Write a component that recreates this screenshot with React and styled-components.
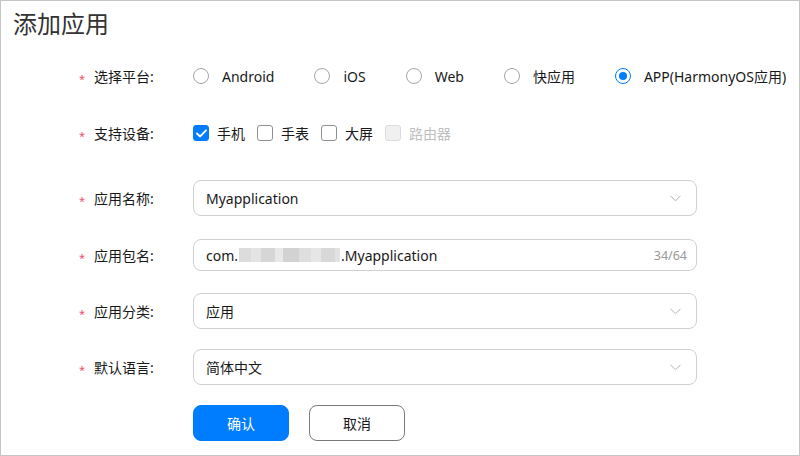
import React from 'react';
import styled, { createGlobalStyle } from 'styled-components';

const GlobalStyle = createGlobalStyle`
  html, body {
    margin: 0;
    padding: 0;
    background: #fff;
  }
  body {
    font-family: "Noto Sans", "Noto Sans CJK SC", sans-serif;
    color: #191919;
  }
`;

const Page = styled.div`
  width: 800px;
  height: 456px;
  box-sizing: border-box;
  border: 1px solid #c4c4c4;
  background: #fff;
  overflow: hidden;
`;

const Title = styled.h1`
  margin: 0;
  padding: 7px 0 0 12px;
  font-size: 24px;
  line-height: 32px;
  font-weight: 400;
  color: #333;
`;

const Form = styled.div`
  display: flex;
  flex-direction: column;
  gap: 20px;
  margin-top: 18px;
  padding-left: 77px;
`;

const Row = styled.div`
  display: flex;
  align-items: center;
  height: 36px;
  margin-top: ${(p) => p.$mt || 0}px;
`;

const Label = styled.div`
  width: 115px;
  flex-shrink: 0;
  display: flex;
  align-items: center;
  font-size: 14px;
  color: #191919;
`;

const Star = styled.span`
  color: #f0506e;
  font-size: 11px;
  width: 15px;
  padding-left: 1px;
  line-height: 1;
  transform: translateY(2px);
`;

const Options = styled.div`
  display: flex;
  align-items: center;
  gap: ${(p) => p.$gap}px;
`;

const Option = styled.label`
  display: flex;
  align-items: center;
  gap: ${(p) => p.$gap}px;
  font-size: 14px;
  color: ${(p) => (p.$disabled ? '#c0c0c0' : '#191919')};
`;

const Radio = styled.span`
  width: 16px;
  height: 16px;
  box-sizing: border-box;
  border-radius: 50%;
  border: ${(p) => (p.$on ? '1.5px solid #007dff' : '1.2px solid #a6a6a6')};
  display: flex;
  align-items: center;
  justify-content: center;
  &::after {
    content: '';
    display: ${(p) => (p.$on ? 'block' : 'none')};
    width: 8px;
    height: 8px;
    border-radius: 50%;
    background: #007dff;
  }
`;

const Check = styled.span`
  width: 16px;
  height: 16px;
  box-sizing: border-box;
  border-radius: 3px;
  display: flex;
  align-items: center;
  justify-content: center;
  background: ${(p) => (p.$on ? '#007dff' : p.$disabled ? '#f0f0f0' : '#fff')};
  border: 1px solid ${(p) => (p.$on ? '#007dff' : p.$disabled ? '#dcdcdc' : '#8f8f8f')};
`;

const Field = styled.div`
  width: 504px;
  height: ${(p) => p.$h}px;
  box-sizing: border-box;
  border: 1px solid #d0d0d0;
  border-radius: 8px;
  display: flex;
  align-items: center;
  padding: 0 9px 0 12px;
  font-size: 14px;
  color: #191919;
`;

const Value = styled.span`
  flex: 1;
  display: flex;
  align-items: center;
  white-space: nowrap;
`;

const Counter = styled.span`
  font-size: 12.5px;
  color: #999;
`;

const Chevron = styled.svg`
  margin-right: 6px;
`;

const Blur = styled.span`
  display: inline-flex;
  height: 14px;
  margin: 0 1px;
  span {
    display: inline-block;
    height: 100%;
  }
`;

const Buttons = styled.div`
  display: flex;
  gap: 20px;
  padding-left: 115px;
`;

const Button = styled.button`
  width: 96px;
  height: 36px;
  box-sizing: border-box;
  border-radius: 8px;
  font-family: inherit;
  font-size: 14px;
  cursor: pointer;
  background: ${(p) => (p.$primary ? '#007dff' : '#fff')};
  color: ${(p) => (p.$primary ? '#fff' : '#191919')};
  border: 1px solid ${(p) => (p.$primary ? '#007dff' : '#7a7a7a')};
`;

const platforms = ['Android', 'iOS', 'Web', '快应用', 'APP(HarmonyOS应用)'];
const devices = [
  { name: '手机', on: true },
  { name: '手表' },
  { name: '大屏' },
  { name: '路由器', disabled: true },
];
const blurs = [
  ['#dcdcdc', 12], ['#e4e4e4', 10], ['#d6d6d6', 14], ['#e8e8e8', 8],
  ['#d2d2d2', 16], ['#dedede', 12], ['#e6e6e6', 10], ['#d8d8d8', 14], ['#e2e2e2', 5],
];

const Select = ({ value }) => (
  <Field $h={36}>
    <Value>{value}</Value>
    <Chevron width="11" height="7" viewBox="0 0 11 7">
      <path d="M0.5 0.8 L5.5 5.8 L10.5 0.8" fill="none" stroke="#b3b3b3" strokeWidth="1" />
    </Chevron>
  </Field>
);

const App = () => {
  return (
    <Page>
      <GlobalStyle />
      <Title>添加应用</Title>
      <Form>
        <Row>
          <Label><Star>*</Star>选择平台:</Label>
          <Options $gap={40}>
            {platforms.map((p, i) => (
              <Option key={p} $gap={13}>
                <Radio $on={i === platforms.length - 1} />
                {p}
              </Option>
            ))}
          </Options>
        </Row>
        <Row $mt={1}>
          <Label><Star>*</Star>支持设备:</Label>
          <Options $gap={12}>
            {devices.map((d) => (
              <Option key={d.name} $gap={8} $disabled={d.disabled}>
                <Check $on={d.on} $disabled={d.disabled}>
                  {d.on && (
                    <svg width="11" height="9" viewBox="0 0 11 9">
                      <path d="M1 4.5 L4 7.5 L10 1.3" fill="none" stroke="#fff" strokeWidth="1.8" strokeLinecap="round" strokeLinejoin="round" />
                    </svg>
                  )}
                </Check>
                {d.name}
              </Option>
            ))}
          </Options>
        </Row>
        <Row $mt={9}>
          <Label><Star>*</Star>应用名称:</Label>
          <Select value="Myapplication" />
        </Row>
        <Row $mt={1}>
          <Label><Star>*</Star>应用包名:</Label>
          <Field $h={32}>
            <Value>
              com.
              <Blur>
                {blurs.map(([c, w], i) => (
                  <span key={i} style={{ background: c, width: w }} />
                ))}
              </Blur>
              .Myapplication
            </Value>
            <Counter>34/64</Counter>
          </Field>
        </Row>
        <Row>
          <Label><Star>*</Star>应用分类:</Label>
          <Select value="应用" />
        </Row>
        <Row>
          <Label><Star>*</Star>默认语言:</Label>
          <Select value="简体中文" />
        </Row>
        <Buttons>
          <Button $primary>确认</Button>
          <Button>取消</Button>
        </Buttons>
      </Form>
    </Page>
  );
};

export default App;
